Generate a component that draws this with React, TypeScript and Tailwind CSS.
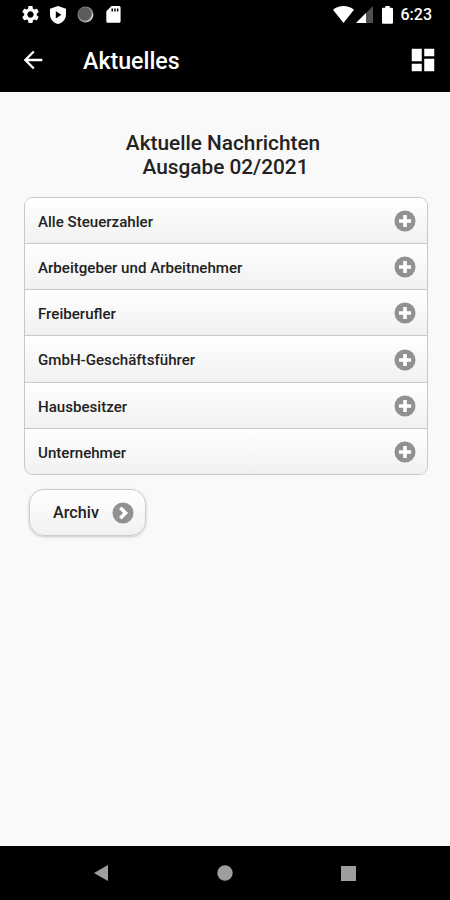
import { MdArrowBack, MdDashboard, MdSettings } from "react-icons/md";

const topics = [
  "Alle Steuerzahler",
  "Arbeitgeber und Arbeitnehmer",
  "Freiberufler",
  "GmbH-Geschäftsführer",
  "Hausbesitzer",
  "Unternehmer",
];

function PlusIcon() {
  return (
    <svg className="mt-px" width="22" height="22" viewBox="0 0 22 22">
      <circle cx="11" cy="11" r="10.5" fill="#919191" />
      <path d="M9.200 4.900h3.600v4.300h4.300v3.600h-4.300v4.300H9.200v-4.300H4.900V9.200h4.300z" fill="#fff" />
    </svg>
  );
}

function ArrowIcon() {
  return (
    <svg width="22" height="22" viewBox="0 0 22 22">
      <circle cx="11" cy="11" r="10.5" fill="#919191" />
      <path d="M8.300 5.700l5.300 5.300-5.300 5.300" fill="none" stroke="#fff" strokeWidth="3.500" />
    </svg>
  );
}

function StatusBar() {
  return (
    <div className="flex h-[29px] items-center justify-between pl-5 pr-[18px]">
      <div className="flex items-center">
        <MdSettings size={21} />
        <svg className="ml-[9px]" width="16" height="18" viewBox="0 0 16 18">
          <path d="M8 0l8 2.800v5.600c0 4.500-3.300 8.300-8 9.600-4.700-1.300-8-5.100-8-9.600V2.800z" fill="#fff" />
          <path d="M5.800 5.200l5.600 3.600-5.600 3.600z" fill="#000" />
        </svg>
        <svg className="ml-[11px]" width="17" height="17" viewBox="0 0 17 17">
          <circle cx="8.500" cy="8.500" r="8" fill="#8a8a8a" />
          <path d="M16 6.500a8 8 0 0 1-9.500 9.500c5 .2 8.500-3.500 9.500-9.500z" fill="#e8e8e8" />
          <circle cx="7.800" cy="7.800" r="6.500" fill="#5c5c5c" />
        </svg>
        <svg className="ml-3" width="15" height="17" viewBox="0 0 15 17">
          <path
            d="M5.500 0h7.500a1.600 1.600 0 0 1 1.600 1.600v13.600a1.600 1.600 0 0 1-1.600 1.600H1.900a1.600 1.600 0 0 1-1.600-1.600V5.200z"
            fill="#fff"
          />
          <path d="M5.500 2.500H7v3H5.500zM8.200 2.500h1.500v3H8.200zM10.900 2.500h1.500v3h-1.500z" fill="#000" />
        </svg>
      </div>
      <div className="flex items-center">
        <svg width="21" height="17" viewBox="0 0 21 17">
          <path d="M0 3.800C6-1.200 15-1.200 21 3.800L10.500 17z" fill="#fff" />
        </svg>
        <svg className="ml-0.5" width="17" height="17" viewBox="0 0 17 17">
          <path d="M17 0v17H0z" fill="#505050" />
          <path d="M10 7v10H0z" fill="#fff" />
        </svg>
        <svg className="ml-[9px]" width="11" height="18" viewBox="0 0 11 18">
          <path
            d="M3.300 0h4.400v1.700H9.800A1.200 1.200 0 0 1 11 2.900v13.700a1.200 1.200 0 0 1-1.200 1.200H1.200A1.200 1.200 0 0 1 0 16.600V2.900a1.200 1.200 0 0 1 1.200-1.200h2.100z"
            fill="#fff"
          />
        </svg>
        <span className="ml-2 pt-px text-base font-medium leading-5">6:23</span>
      </div>
    </div>
  );
}

function AppBar() {
  return (
    <div className="flex h-[63px] items-center pl-[19px] pr-3">
      <MdArrowBack size={28} className="mb-px" />
      <h1 className="ml-9 flex-1 pt-px text-[23.2px] font-medium leading-7">Aktuelles</h1>
      <MdDashboard size={30} className="mb-px" />
    </div>
  );
}

function NavigationBar() {
  return (
    <nav className="flex h-[54px] items-center justify-between bg-black pl-[94px] pr-[94px]">
      <svg width="15" height="16" viewBox="0 0 15 16">
        <path d="M14 0v16L0 8z" fill="#9e9e9e" />
      </svg>
      <svg width="16" height="16" viewBox="0 0 16 16">
        <circle cx="8" cy="8" r="7.700" fill="#9e9e9e" />
      </svg>
      <svg width="15" height="15" viewBox="0 0 15 15">
        <rect width="15" height="15" fill="#9e9e9e" />
      </svg>
    </nav>
  );
}

export default function App() {
  return (
    <div className="flex h-[900px] w-[450px] flex-col bg-[#f9f9f9] font-['Roboto',sans-serif]">
      <header className="bg-black text-white">
        <StatusBar />
        <AppBar />
      </header>

      <main className="flex-1 pl-6 pr-[22px] pt-[39px]">
        <h2 className="pr-1.5 text-center text-[20.8px] font-medium leading-6 text-[#222]">
          Aktuelle Nachrichten
          <br />
          <span className="pl-[5px]">Ausgabe 02/2021</span>
        </h2>

        <ul className="mt-[18px] overflow-hidden rounded-[9px] border border-[#c8c8c8]">
          {topics.map((topic) => (
            <li
              key={topic}
              className="flex h-[46px] items-center justify-between border-b border-[#c8c8c8] bg-linear-to-b from-white to-[#f1f1f1] pl-[13px] pr-[11px] last:h-[45px] last:border-b-0 nth-4:h-[47px]"
            >
              <span className="pt-[3px] text-[15.1px] font-medium text-[#222]">{topic}</span>
              <PlusIcon />
            </li>
          ))}
        </ul>

        <button className="ml-[5px] mt-[14px] flex h-[47px] w-[117px] items-center justify-between rounded-[15px] border border-[#ccc] bg-linear-to-b from-white to-[#f1f1f1] pl-[23px] pr-[11px] shadow-[0_1px_3px_rgba(0,0,0,0.2)]">
          <span className="pt-0.5 text-[16.2px] font-medium text-[#222]">Archiv</span>
          <ArrowIcon />
        </button>
      </main>

      <NavigationBar />
    </div>
  );
}
